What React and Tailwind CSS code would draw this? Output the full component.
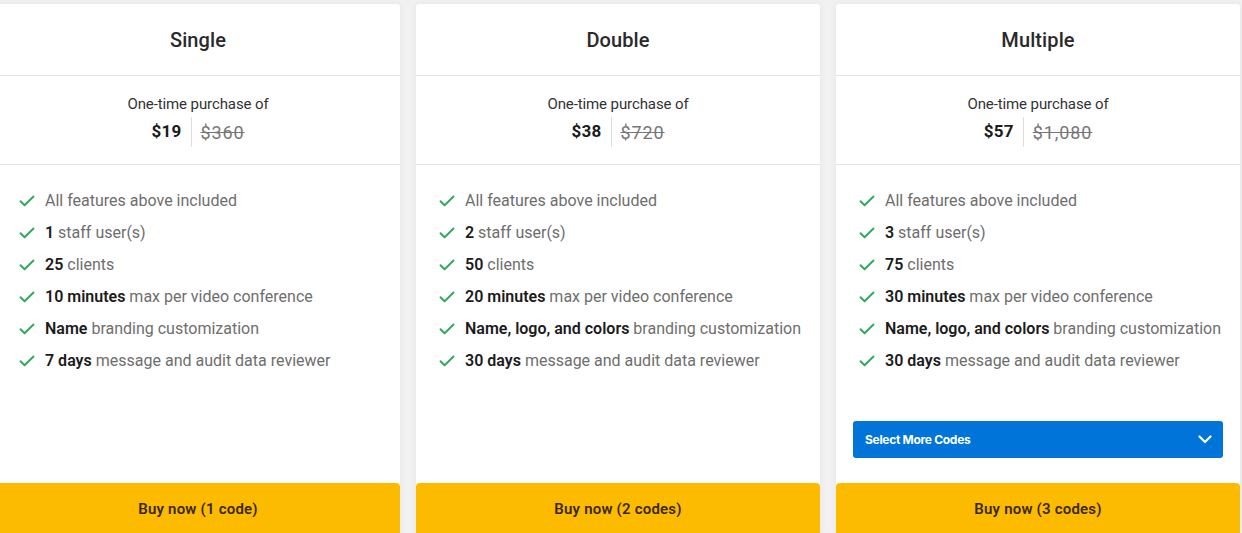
import React from "react";

const plans = [
  {
    title: "Single",
    price: "$19",
    old: "$360",
    staff: "1",
    clients: "25",
    minutes: "10 minutes",
    brand: "Name",
    days: "7 days",
    buy: "Buy now (1 code)",
    select: false,
  },
  {
    title: "Double",
    price: "$38",
    old: "$720",
    staff: "2",
    clients: "50",
    minutes: "20 minutes",
    brand: "Name, logo, and colors",
    days: "30 days",
    buy: "Buy now (2 codes)",
    select: false,
  },
  {
    title: "Multiple",
    price: "$57",
    old: "$1,080",
    staff: "3",
    clients: "75",
    minutes: "30 minutes",
    brand: "Name, logo, and colors",
    days: "30 days",
    buy: "Buy now (3 codes)",
    select: true,
  },
];

function Check() {
  return (
    <svg width="16" height="12" viewBox="0 0 16 12" className="shrink-0">
      <path d="M1.5 6.2 L5.6 10.2 L14.5 1.5" fill="none" stroke="#2fa85a" strokeWidth="1.9" strokeLinecap="round" strokeLinejoin="round" />
    </svg>
  );
}

function Row({ bold, rest }) {
  return (
    <li className="flex items-center h-[32px]">
      <div className="w-[26px] flex items-center">
        <Check />
      </div>
      <span className="text-[16px] text-[#6e6e6e] whitespace-nowrap">
        {bold && <span className="font-semibold text-[#1b1b1b]">{bold}</span>}
        {bold ? " " : ""}
        {rest}
      </span>
    </li>
  );
}

function Card({ p }) {
  return (
    <div className="w-[404px] shrink-0 bg-white flex flex-col h-[530px] rounded-t-[3px] shadow-[0_0_6px_rgba(0,0,0,0.06)]">
      <div className="h-[72px] flex items-center justify-center border-b border-[#e2e2e2] pt-[1px]">
        <span className="text-[20px] font-medium text-[#2a2a2a] tracking-[0.1px]">{p.title}</span>
      </div>
      <div className="h-[89px] flex flex-col items-center border-b border-[#e2e2e2] pt-[18px]">
        <span className="text-[15px] text-[#333] leading-[20px] tracking-[-0.1px]">One-time purchase of</span>
        <div className="flex items-center mt-[3px] h-[30px]">
          <span className="text-[17px] font-bold text-[#1b1b1b] tracking-[0.3px]">{p.price}</span>
          <span className="w-px h-[30px] bg-[#dedede] mx-[9px]"></span>
          <span className="text-[18px] text-[#777] line-through decoration-[#777] tracking-[0.9px]">{p.old}</span>
        </div>
      </div>
      <ul className="pl-[23px] pt-[20px] flex flex-col">
        <Row rest="All features above included" />
        <Row bold={p.staff} rest="staff user(s)" />
        <Row bold={p.clients} rest="clients" />
        <Row bold={p.minutes} rest="max per video conference" />
        <Row bold={p.brand} rest="branding customization" />
        <Row bold={p.days} rest="message and audit data reviewer" />
      </ul>
      <div className="flex-1 flex flex-col justify-end px-[17px] pb-[25px]">
        {p.select && (
          <div className="h-[37px] bg-[#0074d8] rounded-[3px] flex items-center justify-between pl-[12px] pr-[11px]">
            <span className="text-[12px] font-bold text-white tracking-[-0.3px] font-['Inter',sans-serif]">Select More Codes</span>
            <svg width="14" height="9" viewBox="0 0 14 9">
              <path d="M1.5 1.5 L7 7 L12.5 1.5" fill="none" stroke="white" strokeWidth="2.2" strokeLinecap="round" strokeLinejoin="round" />
            </svg>
          </div>
        )}
      </div>
      <div className="h-[51px] bg-[#fdbb00] rounded-t-[4px] flex items-center justify-center pt-[1px]">
        <span className="text-[15px] font-semibold text-[#3a2800] tracking-[0.2px]">{p.buy}</span>
      </div>
    </div>
  );
}

export default function App() {
  return (
    <div className="w-[1242px] h-[533px] overflow-hidden bg-[#f1f1f1] font-['Roboto',sans-serif]">
      <div className="flex gap-[16px] ml-[-4px] pt-[4px]">
        {plans.map((p) => (
          <Card key={p.title} p={p} />
        ))}
      </div>
    </div>
  );
}
